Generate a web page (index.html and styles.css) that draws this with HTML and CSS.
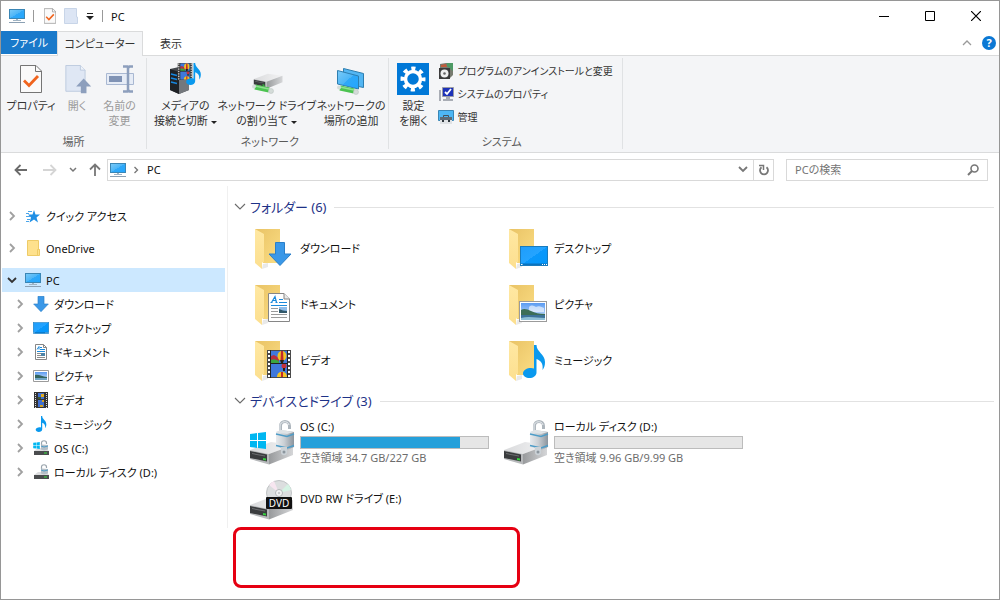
FILE: index.html
```
<!DOCTYPE html>
<html lang="ja">
<head>
    <meta charset="UTF-8">
    <meta name="viewport" content="width=device-width, initial-scale=1.0">
    <title>PC</title>
    <link rel="stylesheet" href="styles.css">
</head>
<body>
    <!-- Shared icon shapes -->
    <svg class="sprite" aria-hidden="true">
        <defs>
            <linearGradient id="gScreen" x1="0" y1="0" x2="1" y2="1">
                <stop offset="0" stop-color="#7ccbf8"/><stop offset=".5" stop-color="#4bb5f7"/><stop offset=".5" stop-color="#2fa8f8"/><stop offset="1" stop-color="#22a6ff"/>
            </linearGradient>
            <linearGradient id="gDesk" x1="0" y1="0" x2="1" y2="1">
                <stop offset="0" stop-color="#1f9dfb"/><stop offset=".5" stop-color="#24a4ff"/><stop offset=".5" stop-color="#0a98fb"/><stop offset="1" stop-color="#0397fb"/>
            </linearGradient>
            <linearGradient id="gFolder" x1="0" y1="0" x2="1" y2="1">
                <stop offset="0" stop-color="#e9c365"/><stop offset="1" stop-color="#fbdd84"/>
            </linearGradient>
            <linearGradient id="gFlap" x1="0" y1="0" x2="0" y2="1">
                <stop offset="0" stop-color="#ffe8a2"/><stop offset="1" stop-color="#fcdf8f"/>
            </linearGradient>
            <linearGradient id="gMetal" x1="0" y1="0" x2="1" y2="0">
                <stop offset="0" stop-color="#d9dadc"/><stop offset="1" stop-color="#f3f3f4"/>
            </linearGradient>
            <linearGradient id="gSide" x1="0" y1="0" x2="1" y2="0">
                <stop offset="0" stop-color="#989a9c"/><stop offset="1" stop-color="#d5d6d8"/>
            </linearGradient>
            <linearGradient id="gLock" x1="0" y1="0" x2="1" y2="0">
                <stop offset="0" stop-color="#e8ebee"/><stop offset=".45" stop-color="#cbd0d5"/><stop offset="1" stop-color="#8b949d"/>
            </linearGradient>
            <linearGradient id="gSky" x1="0" y1="0" x2="0" y2="1">
                <stop offset="0" stop-color="#5a9bf2"/><stop offset="1" stop-color="#dbeafc"/>
            </linearGradient>
        </defs>
        <symbol id="i-pc" viewBox="0 0 16 16">
            <rect x=".5" y="1.5" width="15" height="9" fill="url(#gScreen)" stroke="#3a86b5"/>
            <path d="M7 11h2v1H7zM4 12h8v1H4z" fill="#9fb3c3"/>
            <path d="M0 14h16v1H0z" fill="#8ba0b3"/>
        </symbol>
        <symbol id="i-arrow" viewBox="0 0 24 24">
            <path d="M7.500.5h9v11.500h6.500L12 23.500 1 12h6.500z" fill="#3a98e8" stroke="#2a7fc9"/>
        </symbol>
        <symbol id="i-desktop" viewBox="0 0 28 20">
            <rect x=".5" y=".5" width="27" height="19" fill="url(#gDesk)" stroke="#1a7bbd"/>
            <path d="M1 17.500h26v1.500H1z" fill="#0b72bd"/>
            <path d="M1 18h1.500v1H1zM22 18h1v1h-1zM24 18h1v1h-1zM26 18h1v1h-1z" fill="#fff"/>
        </symbol>
        <symbol id="i-doc" viewBox="0 0 22 29">
            <path d="M.5.5H16L21.500 6v22.500H.5z" fill="#fff" stroke="#868686"/>
            <path d="M16 .5V6h5.500" fill="#e9e9e9" stroke="#868686"/>
            <path d="M3.500 9.500L7 3.500l1.500 6M4.500 7.500H8M2.500 9.500h2M7.500 9.500h2" fill="none" stroke="#1c8adb" stroke-width="1.200"/>
            <path d="M11 6.500h4M11 9.500h8M3 12.500h16" stroke="#1c8adb"/>
            <path d="M3 15.500h7M3 18.500h7M3 21.500h16M3 24.500h16" stroke="#9a9a9a"/>
            <rect x="11" y="14" width="8" height="6" fill="#8dbbe8"/><path d="M11 16l4 1.500 4 .5v2h-8z" fill="#31586a"/>
        </symbol>
        <symbol id="i-doc-small" viewBox="0 0 16 16">
            <path d="M2.500.500h8l3 3v12h-11z" fill="#fff" stroke="#868686"/>
            <path d="M10.500.500v3h3" fill="none" stroke="#868686"/>
            <path d="M4 5.500L6 2.500v3M7 3.500h2M7 5.500h5M4 7.500h8" fill="none" stroke="#1c8adb"/>
            <path d="M4 9.500h4M4 11.500h4M4 13.500h8" stroke="#8c8c8c"/>
            <path d="M8 9h4v3H8z" fill="#4d84a8"/>
        </symbol>
        <symbol id="i-picture" viewBox="0 0 28 21">
            <rect x=".5" y=".5" width="27" height="20" fill="#fff" stroke="#9b9b9b"/>
            <rect x="2" y="2" width="24" height="17" fill="url(#gSky)"/>
            <path d="M10 6c3-3 5-1 7 0 3-2 6 0 8 1v4H10z" fill="#fff" opacity=".6"/>
            <path d="M2 9c3-2 6-1 10 1s8 3 14 3v2H2z" fill="#3c6e57"/>
            <path d="M2 14h24v5H2z" fill="#3c7299"/><path d="M2 17c8-2 16 0 24 0v2H2z" fill="#8fc0d6"/>
        </symbol>
        <symbol id="i-picture-small" viewBox="0 0 16 16">
            <path d="M.5 2.500h15v11H.5z" fill="#fff" stroke="#9b9b9b"/>
            <path d="M2 4h12v8H2z" fill="url(#gSky)"/>
            <path d="M2 7c4-1 7 2 12 2v3H2z" fill="#33655f"/><path d="M2 10h12v2H2z" fill="#6fa5c6"/>
        </symbol>
        <symbol id="i-video" viewBox="0 0 24 28">
            <path d="M0 0h24v28H0z" fill="#4a4a4a"/>
            <path d="M4 1h16v12H4zM4 14h16v13H4z" fill="#3f78dc"/>
            <path d="M2 1v27M22 1v27" stroke="#fff" stroke-width="2" stroke-dasharray="2 2"/>
            <path d="M4 6l3-1 5 3v5H4z" fill="#b9303f"/><path d="M4 10c3-2 6 0 8 1v2H4z" fill="#3aa640"/>
            <ellipse cx="15" cy="6" rx="4.500" ry="5" fill="#f4c422"/><path d="M14 1h2l.5 9h-3z" fill="#c22a2a"/>
            <path d="M13 10h4l-1 3h-2z" fill="#2b2311"/>
            <circle cx="17" cy="16" r="2.500" fill="#c5323c"/><path d="M16 18h2v3h-2z" fill="#2b2311"/>
            <path d="M10 27c0-7 10-7 10 0z" fill="#f4c422"/><path d="M14 22h2v5h-2z" fill="#c22a2a"/>
            <path d="M3.500 0v28M20.500 0v28M3.500 13.500h17" stroke="#222"/>
        </symbol>
        <symbol id="i-video-small" viewBox="0 0 16 16">
            <path d="M1 0h14v16H1z" fill="#333"/>
            <path d="M5 1h6v6H5zM5 8h6v7H5z" fill="#3f6fd0"/>
            <path d="M2.500 1v15M13.500 1v15" stroke="#ddd" stroke-dasharray="1 1"/>
            <path d="M5 5h3v2H5z" fill="#3c5a2d"/><path d="M8 2h3v3H8z" fill="#e0ac20"/><path d="M9 8h2v2H9zM7 13h3v2H7z" fill="#d5a322"/>
        </symbol>
        <symbol id="i-note" viewBox="0 0 22 33">
            <path d="M11 0h2.500c0 7 8.500 9 8.500 17 0 4-1 6-2.500 8 .8-6-1-9-6-11v13.500C13.500 31 10 33 6.500 33S0 31 0 28.500C0 25 4 23 8 23c1.200 0 2.200.2 3 .5z" fill="#0a99ee"/>
        </symbol>
        <symbol id="i-base" viewBox="0 0 46 24">
            <path d="M1 9L22 1l22 3L20 13z" fill="url(#gMetal)"/>
            <path d="M20 13L44 4v10L20 23.500z" fill="url(#gSide)"/>
            <path d="M1 9l19 4v10.500L1 18z" fill="#b8babc"/>
            <path d="M1 10l17 3.500v7L1 17z" fill="#3a3c3e"/>
            <path d="M3 12l13 2.500v1L3 13z" fill="#6c6e70"/>
            <path d="M14 17l3 .5v2l-3-.6z" fill="#35d13d"/>
        </symbol>
        <symbol id="i-lock" viewBox="0 0 20 36">
            <path d="M5.500 14V6c0-6 9-6 9 0v3" fill="none" stroke="#aeb6bd" stroke-width="3"/>
            <path d="M5 13V6c0-5 8-6 9-1" fill="none" stroke="#e9edf0"/>
            <path d="M1 12l5-2 13 2v15l-7 3-11-3z" fill="url(#gLock)"/>
            <path d="M1 12l5-2 13 2-7 2z" fill="#dfe3e6"/>
            <path d="M1 14l11 2.500 7-2.500M1 25.500l11 2.500 7-2.500" fill="none" stroke="#4e9cc7" stroke-width="1.500"/>
            <path d="M6 27h6v6c-1 3-5 3-6 0z" fill="#cbd2d7"/><circle cx="9" cy="32" r="1.500" fill="#8c969e"/>
        </symbol>
        <symbol id="i-win" viewBox="0 0 16 17">
            <path d="M0 2l7-1v7H0zM8 1l8-1v8H8zM0 9h7v7l-7-1zM8 9h8v8l-8-1z" fill="#00b7f1"/>
        </symbol>
        <symbol id="i-folder" viewBox="0 0 48 48">
            <path d="M13 45l6-2v-4l-5 1z" fill="#e9e9e9"/>
            <path d="M6 5h25v34H14z" fill="url(#gFolder)"/>
            <path d="M6 5l9 5v28l-2 .5V45l-7-6z" fill="url(#gFlap)"/>
        </symbol>
        <symbol id="i-drive-small" viewBox="0 0 16 16">
            <path d="M1 11l4-3h8l3 3z" fill="#dcdddf"/>
            <path d="M1 11h15v4H1z" fill="#4a4c4e"/><path d="M11 12.500h3v1h-3z" fill="#36e03e"/>
            <path d="M8.500 5V3c0-3 5-3 5 0v1" fill="none" stroke="#9ba5ad" stroke-width="1.200"/>
            <path d="M8 4.500l7 .5v4.500l-4 1-3-1z" fill="#b5bfc7"/><path d="M8 6l3 1 4-1" fill="none" stroke="#4e9cc7"/>
        </symbol>
        <symbol id="i-chevron" viewBox="0 0 8 10">
            <path d="M2 1l4 4-4 4" fill="none" stroke="currentColor" stroke-width="1.800"/>
        </symbol>
        <symbol id="i-check" viewBox="0 0 22 28">
            <path d="M.5.5H16L21.500 6v21.500H.5z" fill="#fafafa" stroke="#757575"/>
            <path d="M15.500 1v5.500h6" fill="none" stroke="#757575"/>
            <path d="M4 15.500l5 5 9-9.500" fill="none" stroke="#f0641e" stroke-width="2.800"/>
        </symbol>
        <symbol id="i-open" viewBox="0 0 28 32">
            <path d="M.5.500h15.500l5 5v22.500H.5z" fill="#dfe7f4" stroke="#bccade"/>
            <path d="M16 .5v5h5" fill="#eef3fa" stroke="#bccade"/>
            <path d="M19.500 14.500l8 8.500h-5v7h-6v-7h-5z" fill="#8d9fbd"/>
        </symbol>
        <symbol id="i-cable" viewBox="0 0 24 10">
            <path d="M4 3l14 3" stroke="#4cc351" stroke-width="5"/><path d="M4 2l14 3" stroke="#8fe090" stroke-width="1.500"/>
            <circle cx="3" cy="2.500" r="2" fill="#d4dcd9"/><circle cx="20" cy="7" r="2.500" fill="#d4dcd9" stroke="#b6bfbc" stroke-width=".5"/>
        </symbol>
    </svg>

    <div class="window">
        <header class="titlebar">
            <svg class="icon16"><use href="#i-pc"/></svg>
            <span class="bar"></span>
            <button class="plain" aria-label="プロパティ"><svg width="12" height="16"><use href="#i-check"/></svg></button>
            <button class="plain" aria-label="新しいフォルダー"><svg width="14" height="16" viewBox="0 0 14 16"><path d="M.5.500h12V9h1v6.500H.5z" fill="#dce5f4" stroke="#c8d5e8"/></svg></button>
            <button class="plain" aria-label="カスタマイズ"><svg width="8" height="8" viewBox="0 0 8 8"><path d="M1 1h6v1H1zM0 4h8L4 8z" fill="#222"/></svg></button>
            <span class="bar"></span>
            <h1 class="title">PC</h1>
            <div class="controls">
                <button class="plain" aria-label="最小化"><svg width="10" height="10"><path d="M0 5.500h10" stroke="#000"/></svg></button>
                <button class="plain" aria-label="最大化"><svg width="10" height="10"><path d="M.5.500h9v9h-9z" fill="none" stroke="#000"/></svg></button>
                <button class="plain" aria-label="閉じる"><svg width="10" height="10"><path d="M0 0l10 10M10 0L0 10" stroke="#000" stroke-width="1.200"/></svg></button>
            </div>
        </header>

        <nav class="tabs">
            <button class="tab tab-file">ファイル</button>
            <button class="tab tab-active">コンピューター</button>
            <button class="tab">表示</button>
            <div class="tabs-right">
                <button class="plain" aria-label="リボンの最小化"><svg width="10" height="6"><path d="M1 5l4-4 4 4" fill="none" stroke="#9a9a9a" stroke-width="1.300"/></svg></button>
                <button class="help" aria-label="ヘルプ">?</button>
            </div>
        </nav>

        <div class="ribbon">
            <section class="group">
                <div class="group-tools">
                    <button class="tool tool-narrow">
                        <svg viewBox="0 0 32 32"><use href="#i-check" x="5" y="2" width="22" height="28"/></svg>
                        <span>プロパティ</span>
                    </button>
                    <button class="tool tool-narrow" disabled>
                        <svg viewBox="0 0 32 32"><use href="#i-open" x="4" y="2" width="27" height="30"/></svg>
                        <span>開く</span>
                    </button>
                    <button class="tool tool-mini" disabled>
                        <svg viewBox="0 0 32 32">
                            <path d="M2.500 10.500h27v11h-27z" fill="#e6ecf6" stroke="#a9b8d2"/>
                            <path d="M5 13h13v6H5z" fill="#8093b5"/>
                            <path d="M19 3.500h4.500l1 1 1-1H29M19 28.500h4.500l1-1 1 1H29M24 4v24" fill="none" stroke="#8d9fbd" stroke-width="2.500"/>
                        </svg>
                        <span>名前の<br>変更</span>
                    </button>
                </div>
                <h2 class="group-label">場所</h2>
            </section>

            <section class="group group-network">
                <div class="group-tools">
                    <button class="tool tool-mid">
                        <svg viewBox="0 0 32 32">
                            <path d="M1 6l9-2 10 3v20l-10 4-9-4z" fill="#45494e"/>
                            <path d="M1 6l9 3v22l-9-4z" fill="#1f2226"/><path d="M10 9l10-2v20l-10 4z" fill="#74787d"/>
                            <path d="M2 11l6 1.500M2 15l6 1.500M2 19l6 1.500" stroke="#1687e0" stroke-width="1.500"/>
                            <use href="#i-video" x="8" y="0" width="16" height="17"/>
                            <use href="#i-note" x="17" y="0" width="15" height="22"/>
                        </svg>
                        <span>メディアの<br>接続と切断<i class="drop"></i></span>
                    </button>
                    <button class="tool tool-wide">
                        <svg viewBox="0 0 32 32">
                            <use href="#i-base" x="2" y="10" width="31" height="16"/>
                            <use href="#i-cable" x="0" y="21" width="24" height="10"/>
                        </svg>
                        <span>ネットワーク ドライブ<br>の割り当て<i class="drop"></i></span>
                    </button>
                    <button class="tool tool-mid">
                        <svg viewBox="0 0 32 32">
                            <path d="M8.500 5.500l20 5v14l-20-4z" fill="#53b6f3" stroke="#2d7eb0"/>
                            <path d="M2.500 7.500l21 5.500v13L2.500 21z" fill="url(#gScreen)" stroke="#2d7eb0"/>
                            <use href="#i-cable" x="1" y="22" width="24" height="10"/>
                        </svg>
                        <span>ネットワークの<br>場所の追加</span>
                    </button>
                </div>
                <h2 class="group-label">ネットワーク</h2>
            </section>

            <section class="group group-system">
                <div class="group-tools">
                    <button class="tool tool-narrow">
                        <svg viewBox="0 0 32 32">
                            <path d="M0 0h32v32H0z" fill="#0078d7"/>
                            <circle cx="16" cy="16" r="7.500" fill="none" stroke="#fff" stroke-width="3.500"/>
                            <circle cx="16" cy="16" r="10.500" fill="none" stroke="#fff" stroke-width="4" stroke-dasharray="4.100 4.146" stroke-dashoffset="2"/>
                        </svg>
                        <span>設定<br>を開く</span>
                    </button>
                    <div class="tool-list">
                        <button class="tool-row">
                            <svg class="icon16" viewBox="0 0 16 16"><path d="M2 1l6-1h7v12l-3 3H2z" fill="#777b70"/><path d="M9 0h6v8l-6-5z" fill="#4d9a65"/><path d="M3 2l5-1 1 3H3z" fill="#c15c3c"/><path d="M1 5h11v11H1z" fill="#3c3c3c"/><circle cx="6.500" cy="10.500" r="4" fill="#f0f0f0"/><circle cx="6.500" cy="10.500" r="1.300" fill="#666"/></svg>
                            プログラムのアンインストールと変更
                        </button>
                        <button class="tool-row">
                            <svg class="icon16" viewBox="0 0 16 16"><path d="M1 4h2v11H1z" fill="#a9adb5"/><path d="M4.500 1.500h11v9h-11z" fill="#1d32b8" stroke="#9a9ca5"/><path d="M7 6l2 2 4-5" fill="none" stroke="#fff" stroke-width="1.800"/><path d="M8 11h4v2H8zM5 13h10v2H5z" fill="#a9adb5"/></svg>
                            システムのプロパティ
                        </button>
                        <button class="tool-row">
                            <svg class="icon16" viewBox="0 0 16 16"><path d="M.5 1.500h15v10H.5z" fill="#4eb7f4" stroke="#3a86b5"/><path d="M2 8h12v7H2z" fill="#dfe2e5"/><path d="M2 8h12v3H2z" fill="#5e6b75"/><path d="M5.500 8V6.500h5V8" fill="none" stroke="#46525b"/><path d="M4 11h2v2H4zM10 11h2v2h-2z" fill="#30383e"/></svg>
                            管理
                        </button>
                    </div>
                </div>
                <h2 class="group-label">システム</h2>
            </section>
        </div>

        <div class="navbar">
            <div class="nav-buttons">
                <button class="plain" aria-label="戻る"><svg width="14" height="12"><path d="M13 6H2M6.500 1L1.500 6l5 5" fill="none" stroke="#6b6b6b" stroke-width="1.800"/></svg></button>
                <button class="plain" aria-label="進む" disabled><svg width="14" height="12"><path d="M0 6h12M7.500 1l5 5-5 5" fill="none" stroke="#d5d5d5" stroke-width="1.800"/></svg></button>
                <button class="plain nav-recent" aria-label="最近表示した場所"><svg width="8" height="6"><path d="M1 1l3 3 3-3" fill="none" stroke="#777" stroke-width="1.500"/></svg></button>
                <button class="plain nav-up" aria-label="上へ"><svg width="12" height="14"><path d="M6 13V2M1 6.500l5-5 5 5" fill="none" stroke="#777" stroke-width="1.800"/></svg></button>
            </div>
            <div class="address">
                <svg class="icon16"><use href="#i-pc"/></svg>
                <svg class="address-chevron"><use href="#i-chevron"/></svg>
                <a class="crumb" href="#">PC</a>
                <button class="plain address-drop" aria-label="履歴"><svg width="10" height="7"><path d="M1 1l4 4 4-4" fill="none" stroke="#777" stroke-width="1.800"/></svg></button>
                <button class="plain refresh" aria-label="更新"><svg width="12" height="12"><path d="M8.500 3.200A4 4 0 1 1 3.500 3.200" fill="none" stroke="#777" stroke-width="1.800"/><path d="M1 1.500h4.500V6" fill="none" stroke="#777" stroke-width="1.500"/></svg></button>
            </div>
            <form class="search">
                <input type="text" placeholder="PCの検索" aria-label="PCの検索">
                <button class="plain" type="button" aria-label="検索"><svg width="12" height="12"><circle cx="7.500" cy="4.500" r="3.500" fill="none" stroke="#777" stroke-width="1.600"/><path d="M5 7l-4 4" stroke="#777" stroke-width="2"/></svg></button>
            </form>
        </div>

        <div class="body">
            <ul class="tree">
                <li class="node node-root"><svg class="chev"><use href="#i-chevron"/></svg><svg class="icon16" viewBox="0 0 16 16"><path d="M9 2l1.500 4.500H15l-3.500 3L13 14.500 9 11.500 4.500 14.500l1.500-5L3 6.500h4.500z" fill="#1f8fe5"/><path d="M3 3.500h4M1 5.500h3M1 8.500h4M2 11.500h3M1 13.500h3" stroke="#4aa5ea"/></svg>クイック アクセス</li>
                <li class="node node-root"><svg class="chev"><use href="#i-chevron"/></svg><svg class="icon16" viewBox="0 0 16 16"><path d="M2.500.500h11v9h1v6h-12z" fill="#fee18d" stroke="#eecb67"/><path d="M12.500 15V9.500h2" fill="none" stroke="#eecb67"/></svg>OneDrive</li>
                <li class="node node-root node-selected"><svg class="chev chev-open"><use href="#i-chevron"/></svg><svg class="icon16"><use href="#i-pc"/></svg>PC</li>
                <li class="node"><svg class="chev"><use href="#i-chevron"/></svg><svg class="icon16"><use href="#i-arrow"/></svg>ダウンロード</li>
                <li class="node"><svg class="chev"><use href="#i-chevron"/></svg><svg class="icon16"><use href="#i-desktop"/></svg>デスクトップ</li>
                <li class="node"><svg class="chev"><use href="#i-chevron"/></svg><svg class="icon16"><use href="#i-doc-small"/></svg>ドキュメント</li>
                <li class="node"><svg class="chev"><use href="#i-chevron"/></svg><svg class="icon16"><use href="#i-picture-small"/></svg>ピクチャ</li>
                <li class="node"><svg class="chev"><use href="#i-chevron"/></svg><svg class="icon16"><use href="#i-video-small"/></svg>ビデオ</li>
                <li class="node"><svg class="chev"><use href="#i-chevron"/></svg><svg class="icon16"><use href="#i-note"/></svg>ミュージック</li>
                <li class="node"><svg class="chev"><use href="#i-chevron"/></svg><svg class="icon16" viewBox="0 0 16 16"><use href="#i-drive-small" width="16" height="16"/><use href="#i-win" x="0" y="2" width="7" height="7"/></svg>OS (C:)</li>
                <li class="node"><svg class="chev"><use href="#i-chevron"/></svg><svg class="icon16"><use href="#i-drive-small"/></svg>ローカル ディスク (D:)</li>
            </ul>

            <main class="content">
                <h2 class="section"><svg width="12" height="8"><path d="M1 1l5 5 5-5" fill="none" stroke="#6b6b6b" stroke-width="1.100"/></svg>フォルダー (6)</h2>
                <div class="items">
                    <div class="item"><svg class="icon48" viewBox="0 0 48 48"><use href="#i-folder"/><use href="#i-arrow" x="19" y="18" width="24" height="24"/></svg>ダウンロード</div>
                    <div class="item"><svg class="icon48" viewBox="0 0 48 48"><use href="#i-folder"/><use href="#i-desktop" x="17" y="22" width="28" height="20"/></svg>デスクトップ</div>
                    <div class="item"><svg class="icon48" viewBox="0 0 48 48"><use href="#i-folder"/><use href="#i-doc" x="19" y="13" width="22" height="29"/></svg>ドキュメント</div>
                    <div class="item"><svg class="icon48" viewBox="0 0 48 48"><use href="#i-folder"/><use href="#i-picture" x="16" y="21" width="28" height="21"/></svg>ピクチャ</div>
                    <div class="item"><svg class="icon48" viewBox="0 0 48 48"><use href="#i-folder"/><use href="#i-video" x="18" y="14" width="24" height="28"/></svg>ビデオ</div>
                    <div class="item"><svg class="icon48" viewBox="0 0 48 48"><use href="#i-folder"/><use href="#i-note" x="20" y="9" width="22" height="33"/></svg>ミュージック</div>
                </div>

                <h2 class="section">
                    <svg width="12" height="8"><path d="M1 1l5 5 5-5" fill="none" stroke="#6b6b6b" stroke-width="1.100"/></svg>デバイスとドライブ (3)
                </h2>
                <div class="items">
                    <div class="item">
                        <svg class="icon48" viewBox="0 0 48 48"><use href="#i-base" y="23" width="46" height="24"/><use href="#i-win" x="1" y="14" width="16" height="17"/><use href="#i-lock" x="26" y="2" width="20" height="36"/></svg>
                        <div class="drive">
                            <div>OS (C:)</div>
                            <div class="usage"><div class="usage-fill" style="width: 85%"></div></div>
                            <div class="free">空き領域 34.7 GB/227 GB</div>
                        </div>
                    </div>
                    <div class="item">
                        <svg class="icon48" viewBox="0 0 48 48"><use href="#i-base" y="23" width="46" height="24"/><use href="#i-lock" x="26" y="2" width="20" height="36"/></svg>
                        <div class="drive">
                            <div>ローカル ディスク (D:)</div>
                            <div class="usage"><div class="usage-fill" style="width: 0%"></div></div>
                            <div class="free">空き領域 9.96 GB/9.99 GB</div>
                        </div>
                    </div>
                    <div class="item">
                        <svg class="icon48" viewBox="0 0 48 48">
                            <use href="#i-base" y="22" width="46" height="24"/>
                            <circle cx="30" cy="19" r="12.500" fill="#dcdedf" stroke="#bfc2c4"/>
                            <path d="M30 19L20 11a12 12 0 0 1 5-4z" fill="#f7e6f0"/><path d="M30 19l9-9a12 12 0 0 1 3 6z" fill="#d5f3e4"/>
                            <circle cx="30" cy="19" r="3.500" fill="#f6f6f6" stroke="#b3b6b8"/><circle cx="30" cy="19" r="1.300" fill="#c9cbcc"/>
                            <rect x="17" y="23" width="26" height="12" rx="1" fill="#111"/>
                            <text class="dvd" x="30" y="33" text-anchor="middle">DVD</text>
                        </svg>
                        DVD RW ドライブ (E:)
                    </div>
                </div>
                <div class="highlight"></div>
            </main>
        </div>
    </div>
</body>
</html>
```

FILE: styles.css
```
* {
    box-sizing: border-box;
}
body {
    margin: 0;
    font-family: "Noto Sans", "Noto Sans CJK JP", sans-serif;
    font-size: 11px;
    line-height: 15px;
    font-feature-settings: "palt";
    color: #111;
    background-color: #fff;
}
h1, h2, ul {
    margin: 0;
    padding: 0;
    font-size: 11px;
    font-weight: normal;
}
button, input {
    font: inherit;
    font-feature-settings: inherit;
    color: inherit;
    background: none;
    border: none;
    padding: 0;
}
svg {
    flex: none;
    display: block;
}
.sprite {
    position: absolute;
    width: 0;
    height: 0;
}
.icon16 {
    width: 16px;
    height: 16px;
}
.icon48 {
    width: 48px;
    height: 48px;
}
.plain {
    display: flex;
    align-items: center;
    justify-content: center;
}
.window {
    display: flex;
    flex-direction: column;
    min-height: 100vh;
    border: 1px solid #969696;
}

/* Title bar */
.titlebar {
    display: flex;
    align-items: center;
    gap: 8px;
    height: 30px;
    padding-left: 8px;
}
.bar {
    width: 1px;
    height: 12px;
    background-color: #999;
}
.titlebar .bar + .plain {
    margin-left: 2px;
}
.controls {
    display: flex;
    margin-left: auto;
}
.controls .plain {
    width: 46px;
    height: 28px;
}

/* Tabs */
.tabs {
    display: flex;
    height: 25px;
    border-bottom: 1px solid #dadbdc;
}
.tab {
    width: 56px;
    height: 24px;
    color: #333;
}
.tab-file {
    height: 23px;
    color: #fff;
    background-color: #1979ca;
}
.tab-active {
    width: 86px;
    height: 25px;
    padding-bottom: 2px;
    background-color: #f4f5f7;
    border: 1px solid #dadbdc;
    border-bottom: none;
}
.tabs-right {
    display: flex;
    align-items: center;
    gap: 10px;
    margin-left: auto;
    padding-right: 3px;
}
.help {
    width: 14px;
    height: 14px;
    border-radius: 50%;
    font-weight: bold;
    line-height: 14px;
    color: #fff;
    background-color: #0b78d4;
}

/* Ribbon */
.ribbon {
    display: flex;
    padding: 2px 0 3px;
    background-color: #f4f5f7;
    border-bottom: 1px solid #dadbdc;
}
.group {
    display: flex;
    flex-direction: column;
    justify-content: space-between;
    height: 91px;
    padding: 0 7px;
    border-right: 1px solid #e0e2e4;
}
.group-network {
    padding-right: 3px;
}
.group-system {
    padding: 0 9px 0 1px;
}
.group-tools {
    display: flex;
    padding-top: 5px;
}
.group-label {
    text-align: center;
    color: #5a5a5a;
}
.tool {
    display: flex;
    flex-direction: column;
    align-items: center;
    gap: 3px;
    color: #333;
    white-space: nowrap;
}
.tool:disabled {
    color: #9a9a9a;
}
.tool svg {
    width: 32px;
    height: 32px;
}
.tool-mini {
    width: 39px;
}
.tool-narrow {
    width: 46px;
}
.tool-mid {
    min-width: 62px;
}
.tool-wide {
    width: 100px;
}
.drop {
    display: inline-block;
    margin-left: 3px;
    vertical-align: middle;
    border: 3px solid transparent;
    border-top-color: #222;
    border-bottom: none;
}
.tool-list {
    display: flex;
    flex-direction: column;
    gap: 7px;
    padding-left: 2px;
}
.tool-row {
    display: flex;
    align-items: center;
    gap: 3px;
    font-size: 10px;
    color: #333;
    white-space: nowrap;
}

/* Address bar */
.navbar {
    display: flex;
    align-items: center;
    height: 33px;
    padding: 0 11px 0 5px;
}
.nav-buttons {
    display: flex;
}
.nav-buttons .plain {
    width: 29px;
    height: 22px;
}
.nav-buttons .nav-recent {
    width: 18px;
}
.nav-buttons .nav-up {
    width: 25px;
}
.address {
    display: flex;
    flex: 1;
    align-items: center;
    height: 22px;
    padding-left: 2px;
    border: 1px solid #d9d9d9;
}
.address-chevron {
    width: 6px;
    height: 8px;
    margin: 0 8px 0 7px;
    color: #777;
}
.crumb {
    color: #111;
    text-decoration: none;
}
.address-drop {
    width: 20px;
    margin-left: auto;
}
.refresh {
    width: 20px;
    height: 20px;
    border-left: 1px solid #d9d9d9;
}
.search {
    display: flex;
    width: 202px;
    height: 22px;
    margin-left: 12px;
    padding: 0 8px;
    border: 1px solid #d9d9d9;
}
.search input {
    flex: 1;
    min-width: 0;
    outline: none;
}
.search input::placeholder {
    color: #757575;
}

/* Folder tree */
.body {
    display: flex;
    flex: 1;
}
.tree {
    flex: none;
    align-self: flex-start;
    width: 227px;
    height: 342px;
    padding: 18px 2px 0 1px;
    list-style: none;
    border-right: 1px solid #f0f0f0;
}
.node {
    display: flex;
    align-items: center;
    gap: 5px;
    height: 24px;
    padding-left: 14px;
    white-space: nowrap;
}
.node-root {
    margin-bottom: 8px;
    padding-left: 6px;
}
.node-selected {
    margin-bottom: 0;
    background-color: #cce8ff;
}
.chev {
    width: 8px;
    height: 10px;
    margin-right: 4px;
    color: #a0a0a0;
}
.chev-open {
    color: #333;
    transform: rotate(90deg);
}

/* Folders and drives */
.content {
    flex: 1;
    padding: 9px 5px;
}
.section {
    display: flex;
    align-items: center;
    gap: 4px;
    height: 24px;
    padding-left: 1px;
    font-size: 13px;
    line-height: 20px;
    color: #1e3287;
}
.section::after {
    content: "";
    flex: 1;
    height: 1px;
    margin-left: 4px;
    background-color: #e2e2e2;
}
.items {
    display: grid;
    grid-template-columns: 254px 254px;
    padding: 1px 0 1px 16px;
}
.item {
    display: flex;
    align-items: center;
    gap: 3px;
    height: 56px;
}
.drive {
    width: 189px;
}
.usage {
    height: 13px;
    margin: 2px 0 1px;
    border: 1px solid #bcbcbc;
    background-color: #e6e6e6;
}
.usage-fill {
    height: 100%;
    background-color: #26a0da;
}
.free {
    color: #6d6d6d;
}
.dvd {
    font-size: 10px;
    fill: #fff;
}
.highlight {
    width: 287px;
    height: 61px;
    border: 3px solid #e60012;
    border-radius: 8px;
}
```
